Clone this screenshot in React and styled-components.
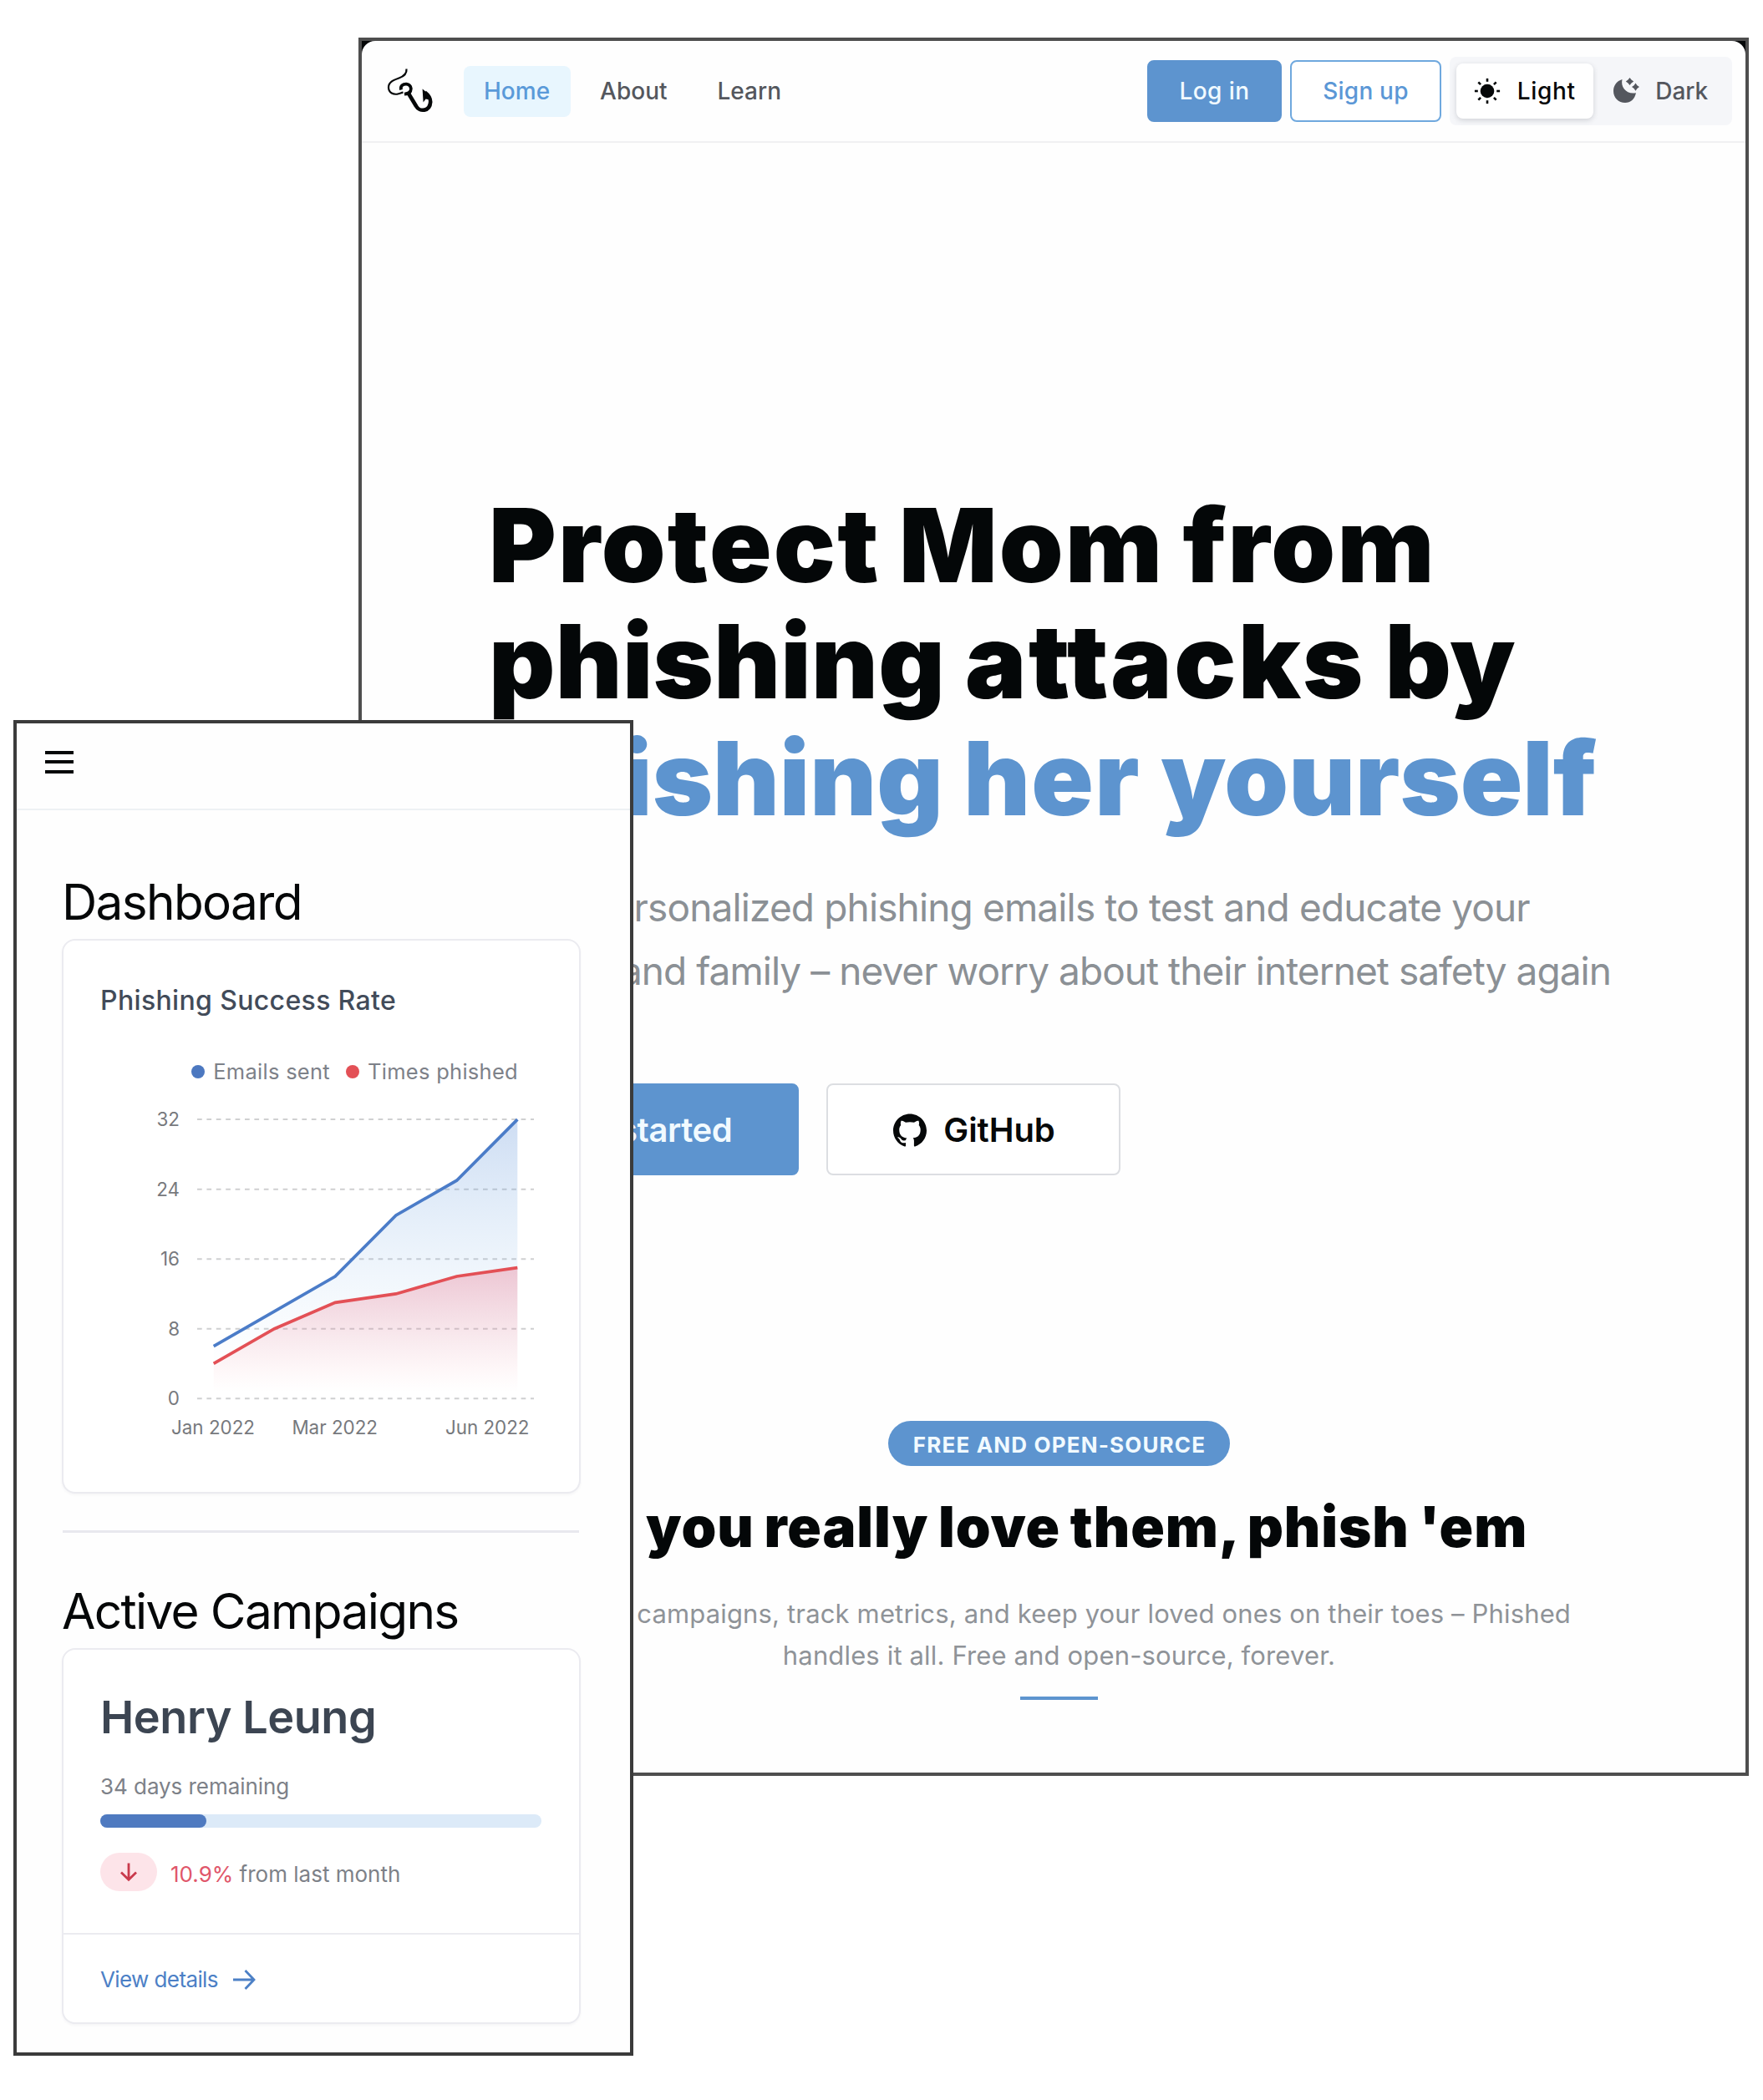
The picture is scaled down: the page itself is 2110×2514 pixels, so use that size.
import React from "react";
import styled, { createGlobalStyle } from "styled-components";

const Global = createGlobalStyle`
  *, *::before, *::after { box-sizing: border-box; }
  body { margin: 0; background: #fff; font-family: Inter, "Liberation Sans", sans-serif; }
  h1, h2, h3, p { margin: 0; }
  button { font-family: inherit; cursor: pointer; }
  svg { display: block; flex: none; }
`;

const blue = "#5d94cf";

const Stage = styled.main`
  position: relative;
  width: 2110px;
  height: 2514px;
  overflow: hidden;
  background: #fff;
`;

/* Overlapping windows */
const DesktopWindow = styled.section`
  position: absolute;
  left: 429px;
  top: 45px;
  width: 1664px;
  height: 2081px;
  border: 4px solid #4e4e4e;
  background: #050708;
`;

const DesktopPage = styled.div`
  height: 100%;
  border-radius: 16px 16px 0 0;
  background: #fefefe;
`;

const PhoneWindow = styled.section`
  position: absolute;
  left: 16px;
  top: 862px;
  width: 742px;
  height: 1599px;
  border: 4px solid #3b3b3b;
  background: #fefefe;
`;

/* Desktop header */
const Header = styled.header`
  display: flex;
  align-items: center;
  height: 122px;
  padding: 0 16px 0 29px;
  border-bottom: 2px solid #f0f0f2;
`;

const Nav = styled.nav`
  display: flex;
  gap: 11px;
  margin-left: 34.5px;
`;

const NavItem = styled.a`
  display: flex;
  align-items: center;
  height: 61px;
  padding: 0 24.5px;
  border-radius: 8px;
  font-size: 28px;
  font-weight: 500;
  color: ${(p) => (p.$active ? "#5a9ad9" : "#54575d")};
  background: ${(p) => (p.$active ? "#e8f6fe" : "transparent")};
`;

const Actions = styled.div`
  display: flex;
  align-items: center;
  gap: 10px;
  margin-left: auto;
`;

const Button = styled.button`
  display: flex;
  align-items: center;
  justify-content: center;
  width: ${(p) => p.$w}px;
  height: 74px;
  padding: 0;
  border-radius: 8px;
  border: 2px solid ${(p) => (p.$filled ? blue : "#6fa8de")};
  font-size: 28px;
  font-weight: 550;
  letter-spacing: ${(p) => (p.$filled ? 0.4 : 0.2)}px;
  color: ${(p) => (p.$filled ? "#f1faff" : "#5b97d6")};
  background: ${(p) => (p.$filled ? blue : "#fff")};
`;

const Segmented = styled.div`
  display: flex;
  width: 338px;
  height: 82px;
  padding: 8px 6px 8px 8px;
  border-radius: 8px;
  background: #f5f6f9;
`;

const Segment = styled.div`
  display: flex;
  flex: none;
  align-items: center;
  justify-content: center;
  gap: 19.5px;
  width: ${(p) => p.$w}px;
  height: 66px;
  border-radius: 8px;
  font-size: 28px;
  font-weight: 500;
  letter-spacing: ${(p) => (p.$on ? 0.7 : 0)}px;
  color: ${(p) => (p.$on ? "#060809" : "#54575e")};
  background: ${(p) => (p.$on ? "#fff" : "transparent")};
  box-shadow: ${(p) => (p.$on ? "0 2px 6px rgba(20, 25, 40, 0.16)" : "none")};
`;

/* Hero */
const Content = styled.div`
  width: 1365px;
  margin-left: 152px;
`;

const HeroTitle = styled.h1`
  padding-top: 412px;
  font-size: 123px;
  font-weight: 900;
  line-height: 139.3px;
  color: #040708;
`;

const TitleLine = styled.span`
  display: block;
  white-space: nowrap;
  letter-spacing: ${(p) => p.$ls || 0}px;
  word-spacing: ${(p) => p.$ws || 0}px;
  color: ${(p) => (p.$accent ? blue : "inherit")};
`;

const Word = styled.span`
  letter-spacing: ${(p) => p.$ls}px;
`;

const HeroText = styled.p`
  margin-top: 47px;
  font-size: 46px;
  line-height: 76.3px;
  color: #8b9095;
`;

const TextLine = styled.span`
  display: block;
  white-space: nowrap;
  letter-spacing: ${(p) => p.$ls}px;
`;

const HeroActions = styled.div`
  display: flex;
  gap: 33px;
  margin-top: 96.5px;
`;

const HeroButton = styled.button`
  display: flex;
  align-items: center;
  justify-content: center;
  gap: 20px;
  width: ${(p) => p.$w}px;
  height: 110px;
  padding: ${(p) => (p.$filled ? "2px 0 0" : "2px 0 0 2px")};
  border-radius: 8px;
  border: 2px solid ${(p) => (p.$filled ? blue : "#dcdee2")};
  font-size: 40px;
  font-weight: 600;
  letter-spacing: ${(p) => (p.$filled ? -0.4 : -0.1)}px;
  color: ${(p) => (p.$filled ? "#f1faff" : "#060809")};
  background: ${(p) => (p.$filled ? blue : "#fff")};
`;

/* Features intro */
const Features = styled.div`
  display: flex;
  flex-direction: column;
  align-items: center;
  margin-top: 294.5px;
`;

const Badge = styled.div`
  display: flex;
  align-items: center;
  justify-content: center;
  width: 409px;
  height: 54px;
  padding: 2px 0 0 1px;
  border-radius: 27px;
  font-size: 26px;
  font-weight: 700;
  letter-spacing: 1.17px;
  color: #f1faff;
  background: ${blue};
`;

const FeaturesTitle = styled.h2`
  margin-top: 33px;
  padding-left: 5px;
  font-size: 67px;
  font-weight: 900;
  line-height: 80px;
  letter-spacing: 0.9px;
  word-spacing: -2.5px;
  white-space: nowrap;
  color: #040708;
`;

const LeadWord = styled.span`
  margin: 0 10px 0 -10px;
`;

const FeaturesText = styled.p`
  margin-top: 39px;
  font-size: 31px;
  line-height: 50px;
  letter-spacing: 0.15px;
  text-align: center;
  white-space: nowrap;
  color: #8f9398;
`;

const Accent = styled.div`
  width: 93px;
  height: 4px;
  margin-top: 24px;
  background: ${blue};
`;

/* Phone */
const PhoneHeader = styled.header`
  height: 104px;
  padding: 33px 34px 0;
  border-bottom: 2px solid #eef1f4;
`;

const Burger = styled.div`
  display: flex;
  flex-direction: column;
  gap: 7.3px;
  width: 34px;
`;

const BurgerLine = styled.span`
  height: 4px;
  background: #050708;
`;

const PhoneBody = styled.div`
  width: 621px;
  margin-left: 54px;
  padding-top: 74px;
`;

const SectionTitle = styled.h2`
  font-size: 58.5px;
  font-weight: 400;
  line-height: 72px;
  letter-spacing: ${(p) => p.$ls}px;
  white-space: nowrap;
  color: #050708;
`;

const Card = styled.article`
  margin-top: 8px;
  height: ${(p) => p.$h}px;
  border: 2px solid #ebebf0;
  border-radius: 16px;
  background: #fff;
  box-shadow: 0 2px 3px rgba(40, 40, 70, 0.04);
`;

const CardBody = styled.div`
  height: ${(p) => p.$h || "auto"};
  padding: ${(p) => p.$top}px 45px 0 44px;
`;

const ChartTitle = styled.h3`
  font-size: 32px;
  font-weight: 500;
  line-height: 40px;
  letter-spacing: 0.35px;
  color: #424b59;
`;

const Legend = styled.div`
  display: flex;
  justify-content: flex-end;
  gap: 18.5px;
  margin-top: 49px;
  padding-right: 28px;
`;

const LegendItem = styled.div`
  display: flex;
  align-items: center;
  gap: 10.5px;
  font-size: 25.5px;
  line-height: 32px;
  letter-spacing: 0.28px;
  white-space: nowrap;
  color: #7d8189;
`;

const Dot = styled.i`
  width: 16px;
  height: 16px;
  border-radius: 50%;
  background: ${(p) => p.$c};
`;

const AxisText = styled.text`
  font-size: 22.4px;
  fill: #77797d;
`;

const Divider = styled.hr`
  height: 3px;
  margin: 44px 2px 58px 1px;
  border: 0;
  background: #e8e8ee;
`;

const Name = styled.h3`
  font-size: 54px;
  font-weight: 600;
  line-height: 64px;
  letter-spacing: -0.45px;
  color: #3c4552;
`;

const Muted = styled.p`
  margin-top: 35px;
  font-size: 26px;
  line-height: 32px;
  letter-spacing: -0.05px;
  color: #7d8188;
`;

const Track = styled.div`
  height: 16px;
  margin-top: 17px;
  border-radius: 8px;
  background: #dceaf8;
`;

const Fill = styled.div`
  width: ${(p) => p.$pct}%;
  height: 100%;
  border-radius: 8px;
  background: #4f7ac0;
`;

const Change = styled.div`
  display: flex;
  align-items: center;
  gap: 16px;
  margin-top: 30px;
  font-size: 26px;
  color: #7d8188;
`;

const ChangeText = styled.span`
  padding-top: 5px;
`;

const Pill = styled.span`
  display: flex;
  align-items: center;
  justify-content: center;
  width: 68px;
  height: 46px;
  border-radius: 23px;
  background: #fde4e9;
`;

const Percent = styled.span`
  color: #e0566a;
`;

const CardFooter = styled.footer`
  display: flex;
  align-items: center;
  gap: 17px;
  height: 106px;
  padding: 3px 44px 0;
  border-top: 2px solid #ebebf0;
  font-size: 26px;
  letter-spacing: -0.6px;
  color: #4c80c6;
`;

const HookLogo = () => (
  <svg width="58" height="58" viewBox="0 0 58 58" fill="none" stroke="#050708">
    <path d="M24.5 2.5C25 7.5 21 11.5 15.5 13.5C8.5 16 3 18.5 3 24.5C3 31 9 34 15 32.2C17.5 31.5 18.5 31 20.5 30.6" strokeWidth="2.2" />
    <path d="M18 27.5C16.8 22.5 20.5 20.5 24.3 20.6C29 21 31 25.5 29.3 29C28 31.5 25.5 32.5 22 32.6" strokeWidth="3.8" />
    <path d="M27 32L36 47C40 54.5 52.5 53.5 53.2 42C53.2 37.5 51 34 46.5 30.5" strokeWidth="4.6" />
    <path d="M43.6 26.5C47.5 29.5 52 33.5 54 38L50 39L47.5 38.5L44.6 42.5Z" fill="#050708" stroke="none" />
  </svg>
);

const SunIcon = () => (
  <svg width="32" height="32" viewBox="0 0 32 32">
    <circle cx="16" cy="16" r="8.3" fill="#060809" />
    <g stroke="#060809" strokeWidth="2.6">
      {[0, 45, 90, 135, 180, 225, 270, 315].map((a) => (
        <line key={a} x1="16" y1="0.9" x2="16" y2="4.8" transform={`rotate(${a} 16 16)`} />
      ))}
    </g>
  </svg>
);

const MoonIcon = () => (
  <svg width="32" height="32" viewBox="0 0 32 32" fill="#54575e">
    <path d="M11.5 2C9.2 11.5 17 20.5 28 18.2C26.5 25.5 21.5 30 15 30C7 30 1 24 1 16C1 9.5 5 4 11.5 2Z" />
    <path d="M20.5 0L22.5 2.6L25.2 4.5L22.5 6.5L20.5 9.1L18.5 6.5L15.8 4.5L18.5 2.6Z" />
    <path d="M27.5 6.5L29.4 9.2L32 11.1L29.4 13L27.5 15.7L25.6 13L23 11.1L25.6 9.2Z" />
  </svg>
);

const GithubIcon = () => (
  <svg width="40" height="40" viewBox="0 0 24 24" fill="#060809">
    <path d="M12 .297c-6.63 0-12 5.373-12 12 0 5.303 3.438 9.8 8.205 11.385.6.113.82-.258.82-.577 0-.285-.01-1.04-.015-2.04-3.338.724-4.042-1.61-4.042-1.61C4.422 18.07 3.633 17.7 3.633 17.7c-1.087-.744.084-.729.084-.729 1.205.084 1.838 1.236 1.838 1.236 1.07 1.835 2.809 1.305 3.495.998.108-.776.417-1.305.76-1.605-2.665-.3-5.466-1.332-5.466-5.93 0-1.31.465-2.38 1.235-3.22-.135-.303-.54-1.523.105-3.176 0 0 1.005-.322 3.3 1.23.96-.267 1.98-.399 3-.405 1.02.006 2.04.138 3 .405 2.28-1.552 3.285-1.23 3.285-1.23.645 1.653.24 2.873.12 3.176.765.84 1.23 1.91 1.23 3.22 0 4.61-2.805 5.625-5.475 5.92.42.36.81 1.096.81 2.22 0 1.606-.015 2.896-.015 3.286 0 .315.21.69.825.57C20.565 22.092 24 17.592 24 12.297c0-6.627-5.373-12-12-12" />
  </svg>
);

const DownArrow = () => (
  <svg width="24" height="24" viewBox="0 0 24 24" fill="none" stroke="#c93a4c" strokeWidth="2.8">
    <path d="M12 1.5V21M3 12.5L12 21.3L21 12.5" />
  </svg>
);

const RightArrow = () => (
  <svg width="28" height="28" viewBox="0 0 28 28" fill="none" stroke="#4c80c6" strokeWidth="2.8">
    <path d="M1 14H26M15.5 3L26 14L15.5 25" />
  </svg>
);

const sent = [6, 10, 14, 21, 25, 32];
const phished = [4, 8, 11, 12, 14, 15];
const px = (i) => 135.7 + i * 72.72;
const py = (v) => 375.2 - v * 10.44;
const line = (d) => d.map((v, i) => `${i ? "L" : "M"}${px(i)} ${py(v)}`).join("");
const area = (d) => `${line(d)}L${px(5)} ${py(0)}L${px(0)} ${py(0)}Z`;

const Chart = () => (
  <svg width="529" height="440" viewBox="0 0 529 440">
    <defs>
      <linearGradient id="sentFill" x1="0" y1="0" x2="0" y2="1">
        <stop offset="0" stopColor="#4f86d4" stopOpacity="0.28" />
        <stop offset="0.9" stopColor="#8cc4ee" stopOpacity="0" />
      </linearGradient>
      <linearGradient id="phishedFill" x1="0" y1="0" x2="0" y2="1">
        <stop offset="0" stopColor="#e8607c" stopOpacity="0.32" />
        <stop offset="0.95" stopColor="#f08090" stopOpacity="0" />
      </linearGradient>
    </defs>
    {[0, 8, 16, 24, 32].map((v) => (
      <g key={v}>
        <line x1="116" x2="519" y1={py(v)} y2={py(v)} stroke="#cfd0d1" strokeWidth="2" strokeDasharray="5.7 5.7" />
        <AxisText x="95" y={py(v) + 8.2} textAnchor="end">{v}</AxisText>
      </g>
    ))}
    <path d={area(sent)} fill="url(#sentFill)" />
    <path d={area(phished)} fill="url(#phishedFill)" />
    <path d={line(sent)} fill="none" stroke="#4b7cc8" strokeWidth="3.7" />
    <path d={line(phished)} fill="none" stroke="#e35056" strokeWidth="3.7" />
    <AxisText x="135" y="418.2" textAnchor="middle">Jan 2022</AxisText>
    <AxisText x="280.7" y="418.2" textAnchor="middle">Mar 2022</AxisText>
    <AxisText x="463.2" y="418.2" textAnchor="middle">Jun 2022</AxisText>
  </svg>
);

export default function App() {
  return (
    <Stage>
      <Global />
      <DesktopWindow>
        <DesktopPage>
          <Header>
            <HookLogo />
            <Nav>
              <NavItem $active>Home</NavItem>
              <NavItem>About</NavItem>
              <NavItem>Learn</NavItem>
            </Nav>
            <Actions>
              <Button $filled $w={161}>Log in</Button>
              <Button $w={181}>Sign up</Button>
              <Segmented>
                <Segment $on $w={164}><SunIcon />Light</Segment>
                <Segment $w={160}><MoonIcon />Dark</Segment>
              </Segmented>
            </Actions>
          </Header>
          <Content>
            <HeroTitle>
              <TitleLine $ls={2.25} $ws={-4.5}>Protect Mom from</TitleLine>
              <TitleLine $ls={0.3} $ws={-1}>
                phishing <Word $ls={2.5}>attacks</Word> by
              </TitleLine>
              <TitleLine $accent>
                phishing <Word $ls={1.2}>her</Word> yourself
              </TitleLine>
            </HeroTitle>
            <HeroText>
              <TextLine $ls={-0.86}>Send personalized phishing emails to test and educate your</TextLine>
              <TextLine $ls={-0.96}>friends and family – never worry about their internet safety again</TextLine>
            </HeroText>
            <HeroActions>
              <HeroButton $filled $w={371}>Get started</HeroButton>
              <HeroButton $w={352}><GithubIcon />GitHub</HeroButton>
            </HeroActions>
            <Features>
              <Badge>FREE AND OPEN-SOURCE</Badge>
              <FeaturesTitle>
                <LeadWord>If</LeadWord> you really love them, phish 'em
              </FeaturesTitle>
              <FeaturesText>
                Create campaigns, track metrics, and keep your loved ones on their toes – Phished<br />
                handles it all. Free and open-source, forever.
              </FeaturesText>
              <Accent />
            </Features>
          </Content>
        </DesktopPage>
      </DesktopWindow>

      <PhoneWindow>
        <PhoneHeader>
          <Burger>
            <BurgerLine />
            <BurgerLine />
            <BurgerLine />
          </Burger>
        </PhoneHeader>
        <PhoneBody>
          <SectionTitle $ls={-1.65}>Dashboard</SectionTitle>
          <Card $h={664}>
            <CardBody $top={52}>
              <ChartTitle>Phishing Success Rate</ChartTitle>
              <Legend>
                <LegendItem><Dot $c="#4c78c0" />Emails sent</LegendItem>
                <LegendItem><Dot $c="#e35056" />Times phished</LegendItem>
              </Legend>
              <Chart />
            </CardBody>
          </Card>
          <Divider />
          <SectionTitle $ls={-1.65}>Active Campaigns</SectionTitle>
          <Card $h={450}>
            <CardBody $top={49} $h="339px">
              <Name>Henry Leung</Name>
              <Muted>34 days remaining</Muted>
              <Track>
                <Fill $pct={24} />
              </Track>
              <Change>
                <Pill><DownArrow /></Pill>
                <ChangeText><Percent>10.9%</Percent> from last month</ChangeText>
              </Change>
            </CardBody>
            <CardFooter>View details<RightArrow /></CardFooter>
          </Card>
        </PhoneBody>
      </PhoneWindow>
    </Stage>
  );
}
